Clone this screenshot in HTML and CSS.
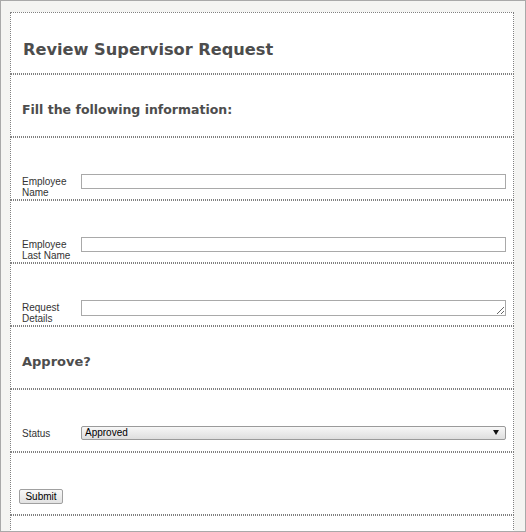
FILE: index.html
```html
<!DOCTYPE html>
<html>
<head>
<meta charset="utf-8">
<title>Review Supervisor Request</title>
<link rel="stylesheet" href="styles.css">
</head>
<body>
<div class="frame">
  <form class="form">
    <div class="section heading-section title-section">
      <h2 class="title">Review Supervisor Request</h2>
    </div>
    <div class="section heading-section sub-section">
      <h3 class="subtitle">Fill the following information:</h3>
    </div>
    <div class="section">
      <div class="row">
        <label class="label">Employee Name</label>
        <input class="field" type="text">
      </div>
    </div>
    <div class="section">
      <div class="row">
        <label class="label">Employee Last Name</label>
        <input class="field" type="text">
      </div>
    </div>
    <div class="section">
      <div class="row">
        <label class="label">Request Details</label>
        <textarea class="field area"></textarea>
      </div>
    </div>
    <div class="section heading-section approve-section">
      <h3 class="approve">Approve?</h3>
    </div>
    <div class="section">
      <div class="row">
        <label class="label">Status</label>
        <div class="select-wrap">
          <select class="select">
            <option>Approved</option>
            <option>Rejected</option>
          </select>
          <span class="arrow"></span>
        </div>
      </div>
    </div>
    <div class="section">
      <button class="submit" type="button">Submit</button>
    </div>
    <div class="section"></div>
  </form>
</div>
</body>
</html>
```
FILE: styles.css
```css
html, body {
  margin: 0;
  padding: 0;
}
body {
  background: #f4f4f2;
  font-family: "Liberation Sans", Arial, sans-serif;
}
.frame {
  box-sizing: border-box;
  height: 532px;
  width: 526px;
  border: 1px solid #a9a9a9;
  background: #f4f4f2;
  overflow: hidden;
  padding: 11px 11px 0 9px;
}
.form {
  margin: 0;
  display: flex;
  flex-direction: column;
}
.section {
  box-sizing: border-box;
  height: 63px;
  flex: none;
  border: 1px dotted #808080;
  background: #fff;
  padding: 36px 7px 0 8px;
}
.title-section {
  height: 62px;
}
.heading-section {
  padding-top: 27px;
  padding-left: 11px;
}
.title-section {
  padding-left: 12px;
}
.title,
.subtitle,
.approve {
  margin: 0;
  font-family: "DejaVu Sans", sans-serif;
  font-weight: 700;
  color: #4d4d4d;
  white-space: nowrap;
}
.title {
  font-size: 16.2px;
  line-height: 19px;
}
.subtitle {
  font-size: 12.5px;
  line-height: 15px;
}
.approve {
  font-size: 13px;
  line-height: 16px;
}
.row {
  display: flex;
  align-items: flex-start;
}
.label {
  box-sizing: border-box;
  width: 62px;
  flex: none;
  padding: 2px 4px 0 3px;
  font-size: 10px;
  line-height: 11px;
  color: #333;
}
.field {
  box-sizing: border-box;
  flex: 1;
  display: block;
  height: 15px;
  margin: 0;
  border: 1px solid #a9a9a9;
  padding: 0 2px;
  font-family: "Liberation Sans", Arial, sans-serif;
  font-size: 10px;
  background: #fff;
  outline: none;
}
.area {
  height: 16px;
  resize: both;
}
.select-wrap {
  position: relative;
  flex: 1;
  height: 14px;
}
.select {
  -webkit-appearance: none;
  appearance: none;
  display: block;
  box-sizing: border-box;
  width: 100%;
  height: 14px;
  margin: 0;
  border: 1px solid #9a9a9a;
  border-radius: 2px;
  padding: 0 0 0 3px;
  font-family: "Liberation Sans", Arial, sans-serif;
  font-size: 10px;
  line-height: 12px;
  color: #000;
  background: linear-gradient(#f7f7f7, #dedede);
  outline: none;
}
.arrow {
  position: absolute;
  right: 7px;
  top: 4px;
  width: 0;
  height: 0;
  border-left: 3px solid transparent;
  border-right: 3px solid transparent;
  border-top: 5px solid #111;
  pointer-events: none;
}
.submit {
  display: block;
  box-sizing: border-box;
  width: 44px;
  height: 15px;
  margin: 0;
  padding: 0;
  border: 1px solid #a0a0a0;
  border-radius: 2px;
  background: linear-gradient(#f8f8f8, #e2e2e2);
  font-family: "Liberation Sans", Arial, sans-serif;
  font-size: 10px;
  line-height: 13px;
  color: #000;
}
```
